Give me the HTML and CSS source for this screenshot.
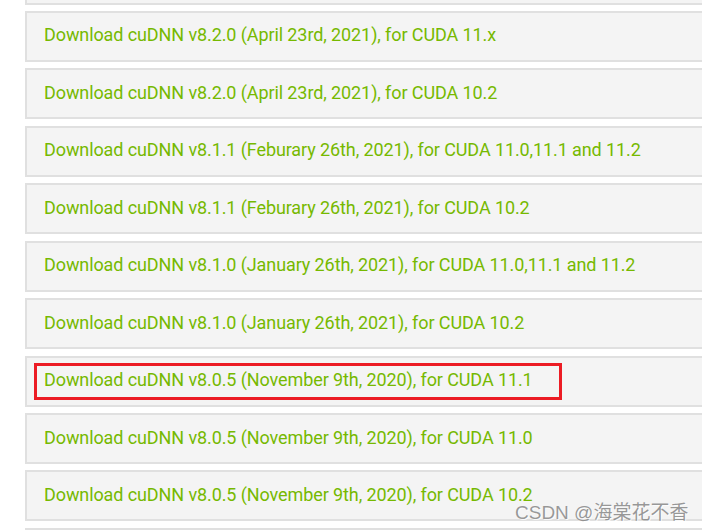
FILE: index.html
```html
<!DOCTYPE html>
<html lang="en">
<head>
    <meta charset="UTF-8">
    <title>cuDNN Archive</title>
    <link rel="stylesheet" href="styles.css">
</head>
<body>
    <div class="archive">
        <ul class="release-list">
            <li class="release cut-top"></li>
            <li class="release"><a href="#">Download cuDNN v8.2.0 (April 23rd, 2021), for CUDA 11.x</a></li>
            <li class="release"><a href="#">Download cuDNN v8.2.0 (April 23rd, 2021), for CUDA 10.2</a></li>
            <li class="release"><a href="#">Download cuDNN v8.1.1 (Feburary 26th, 2021), for CUDA 11.0,11.1 and 11.2</a></li>
            <li class="release"><a href="#">Download cuDNN v8.1.1 (Feburary 26th, 2021), for CUDA 10.2</a></li>
            <li class="release"><a href="#">Download cuDNN v8.1.0 (January 26th, 2021), for CUDA 11.0,11.1 and 11.2</a></li>
            <li class="release"><a href="#">Download cuDNN v8.1.0 (January 26th, 2021), for CUDA 10.2</a></li>
            <li class="release highlighted"><a href="#">Download cuDNN v8.0.5 (November 9th, 2020), for CUDA 11.1</a><span class="mark"></span></li>
            <li class="release"><a href="#">Download cuDNN v8.0.5 (November 9th, 2020), for CUDA 11.0</a></li>
            <li class="release"><a href="#">Download cuDNN v8.0.5 (November 9th, 2020), for CUDA 10.2</a></li>
            <li class="release cut-bottom"></li>
        </ul>
    </div>

    <!-- watermark from the blog post -->
    <div class="watermark">CSDN @海棠花不香</div>
</body>
</html>
```

FILE: styles.css
```css
/* General Styling */
body {
    margin: 0;
    padding: 0;
    background: #ffffff;
    font-family: Roboto, "Liberation Sans", sans-serif;
    overflow: hidden;
    height: 530px;
    position: relative;
}

/* Archive list */
.archive {
    padding-left: 25px;
}

.release-list {
    list-style: none;
    margin: 0;
    padding: 0;
    display: flex;
    flex-direction: column;
    gap: 6.45px;
}

.release {
    position: relative;
    height: 51px;
    box-sizing: border-box;
    background: #f4f4f4;
    border: 2px solid #e0e0e0;
    border-right: none; /* panels run on past the crop */
    display: flex;
    align-items: center;
    padding-left: 17px;
}

/* the panels cut by the top and bottom of the crop */
.release.cut-top {
    height: 4.55px;
    border-top: none;
}

.release.cut-bottom {
    height: 2px;
    border-bottom: none;
}

.release a {
    color: #76b900;
    text-decoration: none;
    font-size: 18px;
    letter-spacing: -0.1px;
    padding-bottom: 3px;
}

/* red box drawn round the chosen release */
.release .mark {
    position: absolute;
    left: 7px;
    top: 5px;
    width: 528px;
    height: 37px;
    box-sizing: border-box;
    border: 3px solid #ec1c24;
}

/* Watermark */
.watermark {
    position: absolute;
    left: 515px;
    top: 497px;
    font-family: "Liberation Sans", "Noto Sans CJK SC", sans-serif;
    font-size: 19px;
    color: rgba(120, 120, 120, 0.75);
    text-shadow: 1px 1px 0 rgba(255, 255, 255, 0.8);
}
```
